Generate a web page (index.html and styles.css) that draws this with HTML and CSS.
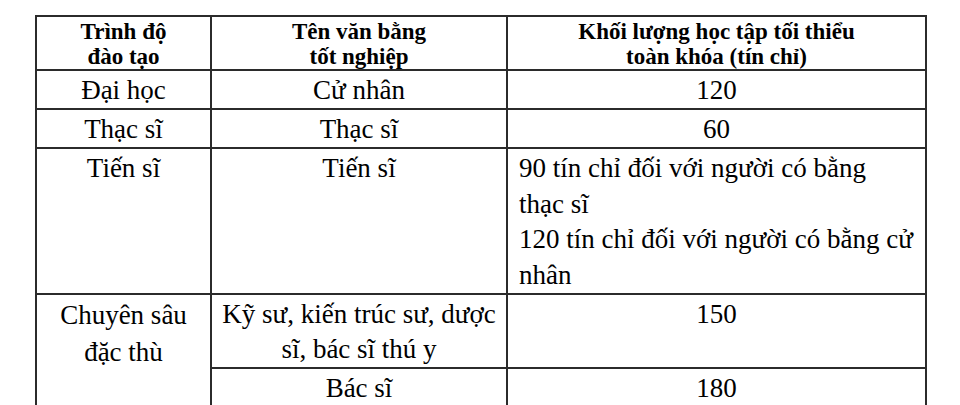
FILE: index.html
```html
<!DOCTYPE html>
<html lang="vi">
<head>
<meta charset="utf-8">
<title>Trình độ đào tạo</title>
<link rel="stylesheet" href="styles.css">
</head>
<body>
<table class="degrees">
  <colgroup>
    <col class="col-level">
    <col class="col-title">
    <col class="col-credits">
  </colgroup>
  <thead>
    <tr>
      <th>Trình độ<br>đào tạo</th>
      <th>Tên văn bằng<br>tốt nghiệp</th>
      <th>Khối lượng học tập tối thiểu<br>toàn khóa (tín chỉ)</th>
    </tr>
  </thead>
  <tbody>
    <tr>
      <td>Đại học</td>
      <td>Cử nhân</td>
      <td>120</td>
    </tr>
    <tr>
      <td>Thạc sĩ</td>
      <td>Thạc sĩ</td>
      <td>60</td>
    </tr>
    <tr>
      <td>Tiến sĩ</td>
      <td>Tiến sĩ</td>
      <td class="left">
        <div>90 tín chỉ đối với người có bằng thạc sĩ</div>
        <div>120 tín chỉ đối với người có bằng cử nhân</div>
      </td>
    </tr>
    <tr>
      <td rowspan="2" class="tall">Chuyên sâu<br>đặc thù</td>
      <td>Kỹ sư, kiến trúc sư, dược sĩ, bác sĩ thú y</td>
      <td>150</td>
    </tr>
    <tr>
      <td>Bác sĩ</td>
      <td>180</td>
    </tr>
  </tbody>
</table>
</body>
</html>
```

FILE: styles.css
```css
html, body {
  margin: 0;
  padding: 0;
  background: #ffffff;
}

body {
  padding: 15px 0 0 35px;
  font-family: "Liberation Serif", "Times New Roman", serif;
  color: #000;
}

.degrees {
  border-collapse: collapse;
  table-layout: fixed;
  width: 890px;
}

.col-level { width: 175px; }
.col-title { width: 296px; }
.col-credits { width: 419px; }

.degrees th,
.degrees td {
  border: 2px solid #2b2b2b;
  vertical-align: top;
  text-align: center;
}

.degrees th {
  font-weight: bold;
  font-size: 23px;
  line-height: 25px;
  padding: 2px 6px 0;
}

.degrees td {
  font-size: 27px;
  line-height: 35px;
  padding: 2px 10px 0;
}

.degrees td.left {
  text-align: left;
  line-height: 35.5px;
  padding-left: 11px;
  padding-right: 10px;
}

.degrees td.tall {
  line-height: 37px;
}
```
